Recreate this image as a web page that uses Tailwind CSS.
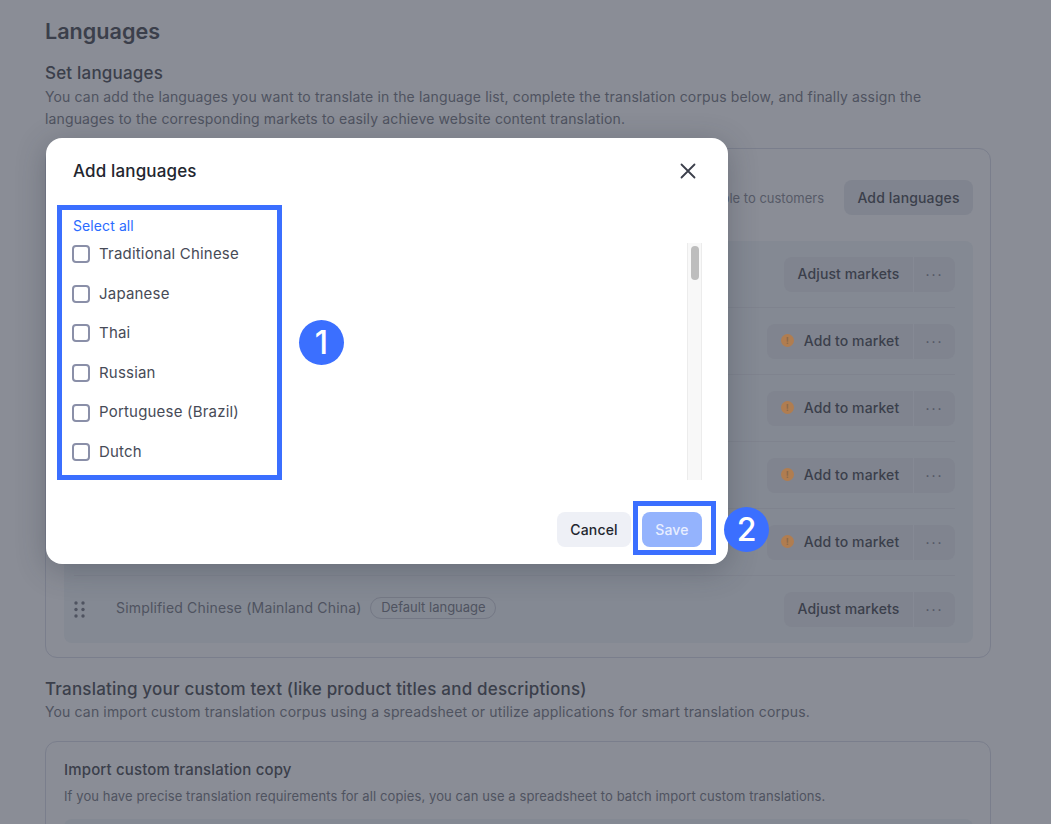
<!DOCTYPE html>
<html lang="en">
<head>
  <meta charset="UTF-8" />
  <title>Languages</title>
  <script src="https://cdn.jsdelivr.net/npm/@tailwindcss/browser@4"></script>
</head>
<body class="bg-[#8a8d96] font-['Inter',sans-serif] text-[#3b3f4b]">
  <div class="relative w-[1051px] h-[824px] overflow-hidden">
    <!-- Page behind the dialog -->
    <main class="pl-[45px] pr-[60px] pt-[17px]">
      <h1 class="text-[21.6px] leading-[28px] font-semibold">Languages</h1>
      <h2 class="mt-[17px] text-[17px] leading-[22px] font-medium tracking-[0.2px]">Set languages</h2>
      <p class="mt-[2px] text-[14px] leading-[22px] text-[#4f5360] tracking-[0.14px]">You can add the languages you want to translate in the language list, complete the translation corpus below, and finally assign the<br />languages to the corresponding markets to easily achieve website content translation.</p>

      <section class="mt-[18px] h-[510px] rounded-[12px] border border-[#7a7e8c] pl-[18px] pr-[17px] pt-[31px]">
        <div class="flex items-center justify-end gap-[20px]">
          <span class="pt-[2px] text-[13px] text-[#565a67]">Only languages added to markets are visible to customers</span>
          <button class="h-[35px] w-[129px] rounded-[8px] bg-[#80848f] text-[14px] tracking-[0.15px] font-medium">Add languages</button>
        </div>
        <div class="mt-[26px] rounded-[8px] bg-[#848993] pl-[10px] pr-[18px] divide-y divide-[#7f838e]">
          <div class="h-[67px] flex items-center justify-end">
            <button class="h-[35px] w-[129px] pb-[2px] rounded-l-[8px] bg-[#80848f] text-[14px] tracking-[0.1px] font-medium">Adjust markets</button>
            <button class="h-[35px] w-[42px] rounded-r-[8px] bg-[#80848f] border-l border-[#858994] text-[14px] tracking-[2px] text-[#4f5360]">···</button>
          </div>
          <div class="h-[67px] flex items-center justify-end">
            <button class="h-[35px] w-[146px] pb-[2px] rounded-l-[8px] bg-[#80848f] text-[14px] tracking-[0.1px] font-medium flex items-center justify-center gap-[10px]"><span class="w-[13px] h-[13px] rounded-full bg-[#b07d50] text-[9px] leading-[13px] font-bold text-[#8a6a4c]">!</span>Add to market</button>
            <button class="h-[35px] w-[42px] rounded-r-[8px] bg-[#80848f] border-l border-[#858994] text-[14px] tracking-[2px] text-[#4f5360]">···</button>
          </div>
          <div class="h-[67px] flex items-center justify-end">
            <button class="h-[35px] w-[146px] pb-[2px] rounded-l-[8px] bg-[#80848f] text-[14px] tracking-[0.1px] font-medium flex items-center justify-center gap-[10px]"><span class="w-[13px] h-[13px] rounded-full bg-[#b07d50] text-[9px] leading-[13px] font-bold text-[#8a6a4c]">!</span>Add to market</button>
            <button class="h-[35px] w-[42px] rounded-r-[8px] bg-[#80848f] border-l border-[#858994] text-[14px] tracking-[2px] text-[#4f5360]">···</button>
          </div>
          <div class="h-[67px] flex items-center justify-end">
            <button class="h-[35px] w-[146px] pb-[2px] rounded-l-[8px] bg-[#80848f] text-[14px] tracking-[0.1px] font-medium flex items-center justify-center gap-[10px]"><span class="w-[13px] h-[13px] rounded-full bg-[#b07d50] text-[9px] leading-[13px] font-bold text-[#8a6a4c]">!</span>Add to market</button>
            <button class="h-[35px] w-[42px] rounded-r-[8px] bg-[#80848f] border-l border-[#858994] text-[14px] tracking-[2px] text-[#4f5360]">···</button>
          </div>
          <div class="h-[67px] flex items-center justify-end">
            <button class="h-[35px] w-[146px] pb-[2px] rounded-l-[8px] bg-[#80848f] text-[14px] tracking-[0.1px] font-medium flex items-center justify-center gap-[10px]"><span class="w-[13px] h-[13px] rounded-full bg-[#b07d50] text-[9px] leading-[13px] font-bold text-[#8a6a4c]">!</span>Add to market</button>
            <button class="h-[35px] w-[42px] rounded-r-[8px] bg-[#80848f] border-l border-[#858994] text-[14px] tracking-[2px] text-[#4f5360]">···</button>
          </div>
          <div class="h-[67px] flex items-center">
            <svg class="w-[11px] h-[17px] text-[#4f5360]" viewBox="0 0 11 17" fill="currentColor">
              <circle cx="2" cy="2" r="1.7" /><circle cx="9" cy="2" r="1.7" />
              <circle cx="2" cy="8.5" r="1.7" /><circle cx="9" cy="8.5" r="1.7" />
              <circle cx="2" cy="15" r="1.7" /><circle cx="9" cy="15" r="1.7" />
            </svg>
            <span class="ml-[31px] pb-[4px] text-[14px] tracking-[0.17px] text-[#4f5360]">Simplified Chinese (Mainland China)</span>
            <span class="ml-[9px] mb-[3px] h-[22px] w-[126px] rounded-full border border-[#747885] text-center text-[13px] leading-[19px] text-[#4f5360]">Default language</span>
            <div class="ml-auto flex">
              <button class="h-[35px] w-[129px] pb-[2px] rounded-l-[8px] bg-[#80848f] text-[14px] tracking-[0.1px] font-medium">Adjust markets</button>
              <button class="h-[35px] w-[42px] rounded-r-[8px] bg-[#80848f] border-l border-[#858994] text-[14px] tracking-[2px] text-[#4f5360]">···</button>
            </div>
          </div>
        </div>
      </section>

      <h2 class="mt-[19px] text-[17px] leading-[24px] font-medium tracking-[0.2px]">Translating your custom text (like product titles and descriptions)</h2>
      <p class="-mt-[1px] text-[14px] leading-[24px] tracking-[0.14px] text-[#4f5360]">You can import custom translation corpus using a spreadsheet or utilize applications for smart translation corpus.</p>

      <section class="mt-[17px] h-[200px] rounded-[12px] border border-[#7a7e8c] pl-[18px] pr-[17px] pt-[17px]">
        <h3 class="text-[15px] leading-[22px] tracking-[0.15px] font-medium">Import custom translation copy</h3>
        <p class="mt-[5px] text-[13px] leading-[20px] tracking-[0.1px] text-[#4f5360]">If you have precise translation requirements for all copies, you can use a spreadsheet to batch import custom translations.</p>
        <div class="mt-[13px] h-[80px] rounded-[8px] bg-[#848993]"></div>
      </section>
    </main>

    <!-- Add languages dialog -->
    <div class="absolute left-[46px] top-[138px] w-[682px] h-[426px] rounded-[16px] bg-white shadow-[0_6px_30px_rgba(40,45,60,0.3)] flex flex-col">
      <div class="flex items-center justify-between pl-[27px] pr-[31px] pt-[20px] h-[45px] shrink-0">
        <h2 class="pt-[2px] text-[17px] font-medium tracking-[0.15px] text-[#23262f]">Add languages</h2>
        <svg class="w-[18px] h-[18px] text-[#3b3f4b]" viewBox="0 0 18 18" fill="none" stroke="currentColor" stroke-width="1.8" stroke-linecap="round"><path d="M2.5 2.5l13 13M15.5 2.5l-13 13" /></svg>
      </div>
      <div class="flex pl-[26px] pr-[26px] mt-[32px] h-[265px] overflow-hidden shrink-0">
        <div class="flex-1 text-[15px] tracking-[0.2px] text-[#474b57] pt-[2px]">
          <a class="block pl-px text-[14px] leading-[18px] tracking-[0.1px] text-[#2b6bff]">Select all</a>
          <ul class="-mt-[0.6px]">
            <li class="h-[39.6px] flex items-center gap-[9px]"><span class="w-[18px] h-[18px] rounded-[4px] border-2 border-[#8a8fa8]"></span>Traditional Chinese</li>
            <li class="h-[39.6px] flex items-center gap-[9px]"><span class="w-[18px] h-[18px] rounded-[4px] border-2 border-[#8a8fa8]"></span>Japanese</li>
            <li class="h-[39.6px] flex items-center gap-[9px]"><span class="w-[18px] h-[18px] rounded-[4px] border-2 border-[#8a8fa8]"></span>Thai</li>
            <li class="h-[39.6px] flex items-center gap-[9px]"><span class="w-[18px] h-[18px] rounded-[4px] border-2 border-[#8a8fa8]"></span>Russian</li>
            <li class="h-[39.6px] flex items-center gap-[9px]"><span class="w-[18px] h-[18px] rounded-[4px] border-2 border-[#8a8fa8]"></span>Portuguese (Brazil)</li>
            <li class="h-[39.6px] flex items-center gap-[9px]"><span class="w-[18px] h-[18px] rounded-[4px] border-2 border-[#8a8fa8]"></span>Dutch</li>
          </ul>
        </div>
        <div class="w-[15px] mt-[28px] h-[237px] bg-[#f8f8f8] border-x border-[#ececec] pt-[3px] pl-[3px]">
          <div class="w-[8px] h-[34px] rounded-full bg-[#bdbdbd]"></div>
        </div>
      </div>
      <div class="flex justify-end gap-[11px] pr-[26px] mt-[32px]">
        <button class="h-[35px] w-[74px] rounded-[8px] bg-[#eef0f6] text-[14px] font-medium tracking-[0.15px] text-[#23262f]">Cancel</button>
        <button class="h-[35px] w-[60px] rounded-[8px] bg-[#94b3fd] text-[14px] font-medium tracking-[0.15px] text-[#e8eeff]">Save</button>
      </div>
    </div>

    <!-- Tutorial annotations -->
    <div class="absolute left-[57px] top-[205px] w-[225px] h-[275px] border-[5px] border-[#3b6fff]"></div>
    <div class="absolute left-[633px] top-[501px] w-[83px] h-[54px] border-[5px] border-[#3b6fff]"></div>
    <div class="absolute left-[299px] top-[320px] w-[45px] h-[45px] rounded-full bg-[#3b6fff] text-white text-[32px] font-medium leading-[45px] text-center">1</div>
    <div class="absolute left-[724px] top-[507px] w-[45px] h-[45px] rounded-full bg-[#3b6fff] text-white text-[32px] font-medium leading-[45px] text-center">2</div>
  </div>
</body>
</html>
